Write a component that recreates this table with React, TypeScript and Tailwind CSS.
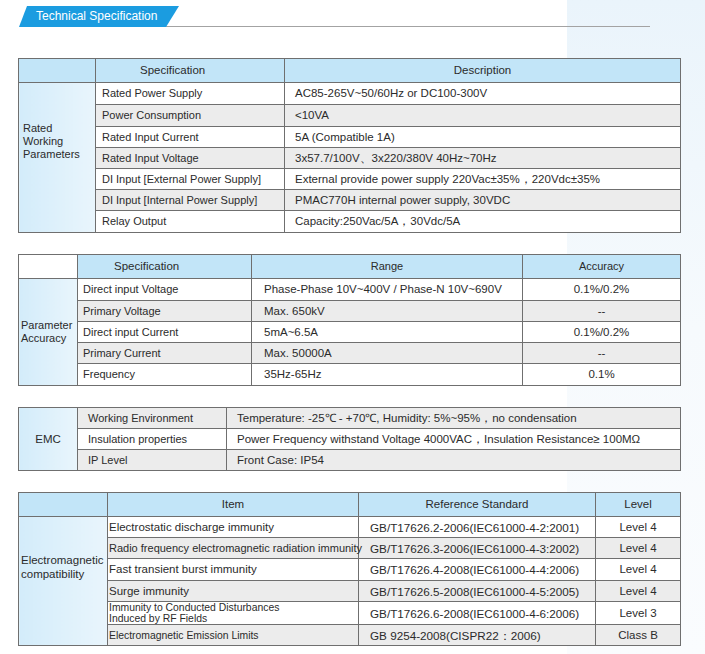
import type { FC, ReactNode } from 'react'

const border = 'border border-[#6f6f6f]'
const gray = 'bg-[#ececec]'
const head = 'bg-[#c2e5f8]'
const side = 'bg-gradient-to-r from-[#d3ecfa] to-[#e9f5fc]'

type CellProps = {
  children?: ReactNode
  className?: string
  rowSpan?: number
}

const Td: FC<CellProps> = ({ children, className = '', rowSpan }) => (
  <td rowSpan={rowSpan} className={`${border} p-0 align-middle ${className}`}>
    {children}
  </td>
)

const ratedRows: [string, string][] = [
  ['Rated Power Supply', 'AC85-265V~50/60Hz or DC100-300V'],
  ['Power Consumption', '<10VA'],
  ['Rated Input Current', '5A (Compatible 1A)'],
  ['Rated Input Voltage', '3x57.7/100V、3x220/380V  40Hz~70Hz'],
  ['DI Input [External Power Supply]', 'External provide power supply 220Vac±35%，220Vdc±35%'],
  ['DI Input [Internal Power Supply]', 'PMAC770H internal power supply, 30VDC'],
  ['Relay Output', 'Capacity:250Vac/5A，30Vdc/5A'],
]
const ratedHeights = ['h-[22px]', 'h-[22px]', 'h-[21px]', 'h-[21px]', 'h-[21px]', 'h-[21px]', 'h-[22px]']

const accuracyRows: [string, string, string][] = [
  ['Direct input Voltage', 'Phase-Phase 10V~400V / Phase-N 10V~690V', '0.1%/0.2%'],
  ['Primary Voltage', 'Max. 650kV', '--'],
  ['Direct input Current', '5mA~6.5A', '0.1%/0.2%'],
  ['Primary Current', 'Max. 50000A', '--'],
  ['Frequency', '35Hz-65Hz', '0.1%'],
]
const accuracyHeights = ['h-[22px]', 'h-[21px]', 'h-[21px]', 'h-[21px]', 'h-[22px]']

const emcRows: [string, string][] = [
  ['Working Environment', 'Temperature: -25℃ - +70℃, Humidity: 5%~95%，no condensation'],
  ['Insulation properties', 'Power Frequency withstand Voltage 4000VAC，Insulation Resistance≥ 100MΩ'],
  ['IP Level', 'Front Case: IP54'],
]
const emcHeights = ['h-[21px]', 'h-[21px]', 'h-[21px]']

const compatRows: { item: ReactNode; size: string; std: string; level: string }[] = [
  {
    item: 'Electrostatic discharge immunity',
    size: 'text-[11.5px]',
    std: 'GB/T17626.2-2006(IEC61000-4-2:2001)',
    level: 'Level 4',
  },
  {
    item: 'Radio frequency electromagnetic radiation immunity',
    size: 'text-[11px]',
    std: 'GB/T17626.3-2006(IEC61000-4-3:2002)',
    level: 'Level 4',
  },
  {
    item: 'Fast transient burst immunity',
    size: 'text-[11.5px]',
    std: 'GB/T17626.4-2008(IEC61000-4-4:2006)',
    level: 'Level 4',
  },
  { item: 'Surge immunity', size: 'text-[11.5px]', std: 'GB/T17626.5-2008(IEC61000-4-5:2005)', level: 'Level 4' },
  {
    item: (
      <>
        Immunity to Conducted Disturbances
        <br />
        Induced by RF Fields
      </>
    ),
    size: 'text-[10.4px] leading-[11px]',
    std: 'GB/T17626.6-2008(IEC61000-4-6:2006)',
    level: 'Level 3',
  },
  {
    item: 'Electromagnetic Emission Limits',
    size: 'text-[10.4px]',
    std: 'GB 9254-2008(CISPR22：2006)',
    level: 'Class B',
  },
]
const compatHeights = ['h-[21px]', 'h-[21px]', 'h-[22px]', 'h-[21px]', 'h-[21px]', 'h-[21px]']

const tableClass = 'w-[663px] table-fixed border-collapse'

export default function App() {
  return (
    <div className="relative min-h-[654px] w-[705px] overflow-hidden bg-white font-['Liberation_Sans',Arial,sans-serif] text-[11.5px] leading-[13px] text-[#2b2b2b]">
      {/* faint background watermark on the right */}
      <div className="pointer-events-none absolute top-0 right-0 h-full w-[138px] bg-gradient-to-b from-[#eaf4fb] via-[#f6fafd] to-[#fafcfe]" />

      <div className="relative pt-[6px]">
        <div className="flex items-end">
          <div className="ml-[19px] flex h-[21px] w-[160px] items-center bg-[#1b9ce0] pl-[17px] text-[12px] text-white [clip-path:polygon(8px_0,160px_0,147px_100%,0_100%)]">
            Technical Specification
          </div>
          <div className="-ml-[13px] h-px w-[484px] bg-[#a3a3a3]" />
        </div>

        <div className="mt-[31px] flex flex-col gap-[21px] pl-[18px]">
          {/* Rated working parameters */}
          <table className={tableClass}>
            <colgroup>
              <col className="w-[77px]" />
              <col className="w-[189px]" />
              <col />
            </colgroup>
            <tbody>
              <tr className="h-[24px]">
                <Td className={head} />
                <Td className={`${head} pl-[44px]`}>Specification</Td>
                <Td className={`${head} text-center`}>Description</Td>
              </tr>
              {ratedRows.map(([spec, desc], i) => (
                <tr key={spec} className={ratedHeights[i]}>
                  {i === 0 && (
                    <Td rowSpan={7} className={`${side} pl-[4px] pb-[32px] text-[11px]`}>
                      Rated
                      <br />
                      Working
                      <br />
                      Parameters
                    </Td>
                  )}
                  <Td className={`${i % 2 ? gray : 'bg-white'} pl-[6px] text-[11px]`}>{spec}</Td>
                  <Td className={`${i % 2 ? gray : 'bg-white'} pl-[10px]`}>{desc}</Td>
                </tr>
              ))}
            </tbody>
          </table>

          {/* Parameter accuracy */}
          <table className={tableClass}>
            <colgroup>
              <col className="w-[59px]" />
              <col className="w-[174px]" />
              <col className="w-[271px]" />
              <col />
            </colgroup>
            <tbody>
              <tr className="h-[24px]">
                <Td className="bg-white" />
                <Td className={`${head} pl-[36px]`}>Specification</Td>
                <Td className={`${head} text-center text-[11px]`}>Range</Td>
                <Td className={`${head} text-center text-[11px]`}>Accuracy</Td>
              </tr>
              {accuracyRows.map(([spec, range, acc], i) => (
                <tr key={spec} className={accuracyHeights[i]}>
                  {i === 0 && (
                    <Td rowSpan={5} className={`${side} pl-[2px] text-[11px]`}>
                      Parameter
                      <br />
                      Accuracy
                    </Td>
                  )}
                  <Td className={`${i % 2 ? gray : 'bg-white'} pl-[5px] text-[11px]`}>{spec}</Td>
                  <Td className={`${i % 2 ? gray : 'bg-white'} pl-[12px]`}>{range}</Td>
                  <Td className={`${i % 2 ? gray : 'bg-white'} text-center`}>{acc}</Td>
                </tr>
              ))}
            </tbody>
          </table>

          {/* EMC */}
          <table className={tableClass}>
            <colgroup>
              <col className="w-[59px]" />
              <col className="w-[149px]" />
              <col />
            </colgroup>
            <tbody>
              {emcRows.map(([name, value], i) => (
                <tr key={name} className={emcHeights[i]}>
                  {i === 0 && (
                    <Td rowSpan={3} className={`${side} text-center`}>
                      EMC
                    </Td>
                  )}
                  <Td className={`${i % 2 ? 'bg-white' : gray} pl-[10px] text-[11px]`}>{name}</Td>
                  <Td className={`${i % 2 ? 'bg-white' : gray} pl-[10px]`}>{value}</Td>
                </tr>
              ))}
            </tbody>
          </table>

          {/* Electromagnetic compatibility */}
          <table className={tableClass}>
            <colgroup>
              <col className="w-[89px]" />
              <col className="w-[251px]" />
              <col className="w-[237px]" />
              <col />
            </colgroup>
            <tbody>
              <tr className="h-[24px]">
                <Td className={head} />
                <Td className={`${head} text-center`}>Item</Td>
                <Td className={`${head} text-center`}>Reference Standard</Td>
                <Td className={`${head} text-center`}>Level</Td>
              </tr>
              {compatRows.map((row, i) => (
                <tr key={row.std} className={compatHeights[i]}>
                  {i === 0 && (
                    <Td rowSpan={6} className={`${side} pl-[2px] pb-[28px] text-[11.5px] leading-[14px]`}>
                      Electromagnetic
                      <br />
                      compatibility
                    </Td>
                  )}
                  <Td className={`${i % 2 ? gray : 'bg-white'} whitespace-nowrap pl-px ${row.size}`}>{row.item}</Td>
                  <Td className={`${i % 2 ? gray : 'bg-white'} pl-[11px] text-[11.7px]`}>{row.std}</Td>
                  <Td className={`${i % 2 ? gray : 'bg-white'} text-center`}>{row.level}</Td>
                </tr>
              ))}
            </tbody>
          </table>
        </div>
      </div>
    </div>
  )
}
